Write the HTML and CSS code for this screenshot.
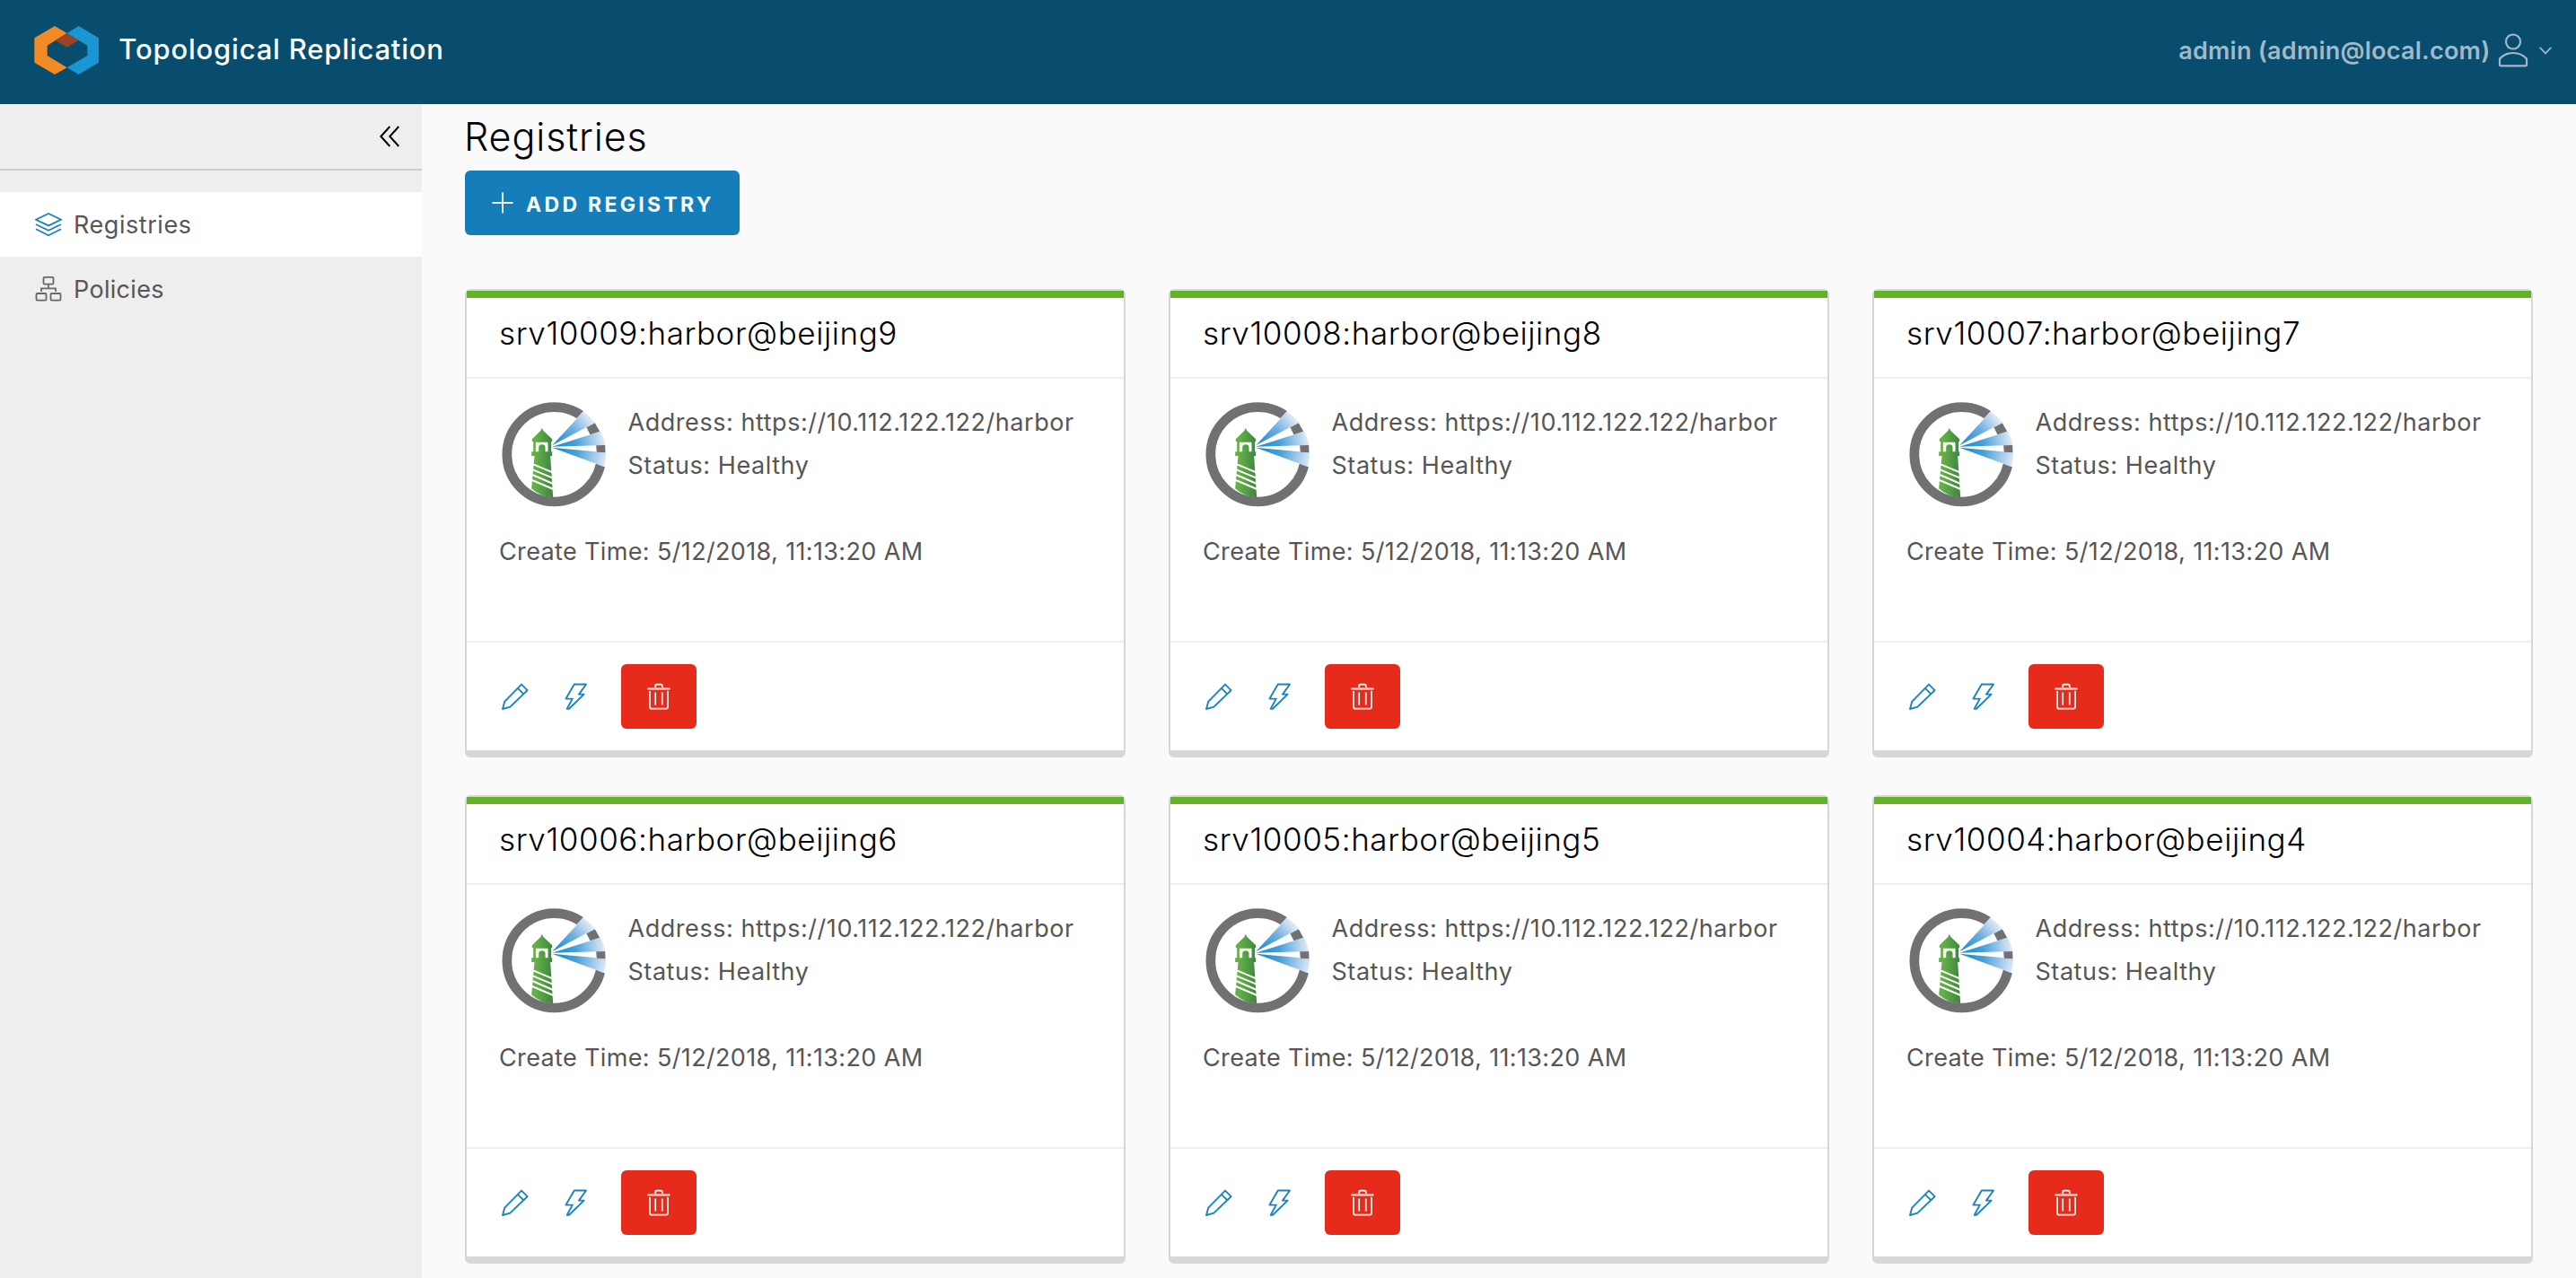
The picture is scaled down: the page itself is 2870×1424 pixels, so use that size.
FILE: index.html
```html
<!DOCTYPE html>
<html lang="en">
<head>
<meta charset="utf-8">
<title>Topological Replication</title>
<link rel="stylesheet" href="styles.css">
</head>
<body>
<svg class="defs" aria-hidden="true">
  <defs>
    <linearGradient id="tower" x1="138" y1="0" x2="210" y2="0" gradientUnits="userSpaceOnUse"><stop offset="0.2" stop-color="#64b045"/><stop offset="1" stop-color="#3c8540"/></linearGradient>
    <linearGradient id="beam1" x1="208" y1="184" x2="334" y2="84" gradientUnits="userSpaceOnUse"><stop offset="0" stop-color="#1488cb"/><stop offset="0.55" stop-color="#72afdf"/><stop offset="1" stop-color="#e8eff9"/></linearGradient>
    <linearGradient id="beam2" x1="208" y1="188" x2="382" y2="160" gradientUnits="userSpaceOnUse"><stop offset="0" stop-color="#1488cb"/><stop offset="0.45" stop-color="#4a9fd8"/><stop offset="1" stop-color="#e2ebf8"/></linearGradient>
    <linearGradient id="beam3" x1="208" y1="190" x2="386" y2="232" gradientUnits="userSpaceOnUse"><stop offset="0" stop-color="#1488cb"/><stop offset="0.45" stop-color="#4a9fd8"/><stop offset="1" stop-color="#dde9f7"/></linearGradient>
  </defs>
  <symbol id="harbor" viewBox="40 38 348 351">
    <circle cx="214" cy="213" r="158" fill="#fff" stroke="#717174" stroke-width="32"/>
    <path d="M208 183L340 36H420V268L208 191Z" fill="#fff"/>
    <path d="M207 183L311 70Q334 85 352 106Z" fill="url(#beam1)"/>
    <path d="M207 187L368 136Q380 157 385 182Z" fill="url(#beam2)"/>
    <path d="M207 190L387 207Q387 232 380 254Z" fill="url(#beam3)"/>
    <path d="M322 123L350 108L366 136L334 147ZM354 183L384 182L385 207L356 205Z" fill="#717174"/>
    <path d="M173 124L177 133L207 162V170H204V204H207V218H201L210 356Q170 357 138 327L148 218H138V204H144V170H140V162L169 133Z" fill="url(#tower)"/>
    <path d="M152 172H193V204H184V190Q184 180 173 180Q162 180 162 190V204H152Z" fill="#fff"/>
    <path d="M144 246L208 273M142 264L209 292M141 281L210 311M140 299L211 329" stroke="#fff" stroke-width="6"/>
  </symbol>
  <symbol id="pencil" viewBox="0 0 30 30"><path d="M1 29L3.3 20.6L22 1.6L28.5 8.2L9.4 26.6ZM17.8 5.8L24.3 12.4" fill="none" stroke="currentColor" stroke-width="1.9" stroke-linejoin="round"/></symbol>
  <symbol id="bolt" viewBox="0 0 26 30"><path d="M10.8 1.5H24L16 12.6H21.6L5 28.7H2.7L8.8 17.6H1.5Z" fill="none" stroke="currentColor" stroke-width="1.9" stroke-linejoin="round"/></symbol>
  <symbol id="trash" viewBox="0 0 26 30"><path d="M0.5 6.5H25.5M9.2 5V3Q9.2 1.6 10.6 1.6H15.4Q16.8 1.6 16.8 3V5M3 9V26.8Q3 28.6 4.8 28.6H21.2Q23 28.6 23 26.8V9M9.2 10.5V24.5M16.8 10.5V24.5" fill="none" stroke="currentColor" stroke-width="1.8"/></symbol>
</svg>

<header class="header">
  <svg class="logo" viewBox="38 27 217 162">
    <path d="M107 27L148 51L82 92V126L148 166L107 189L39 149V67Z" fill="#f38b25"/>
    <path d="M187 27L254 67V149L187 189L148 166L216 126V92L148 51Z" fill="#1a96d4"/>
    <path d="M148 51L187 74L148 98L108 75Z" fill="#974424"/>
  </svg>
  <span class="brand">Topological Replication</span>
  <div class="account">
    <span class="account-name">admin (admin@local.com)</span>
    <svg class="icon-user" viewBox="0 0 34 38"><circle cx="17" cy="9.5" r="8" /><path d="M2 28.5Q8 22 17 22T32 28.5V35Q32 36.4 30.6 36.4H3.4Q2 36.4 2 35Z"/></svg>
    <svg class="icon-caret" viewBox="0 0 14 9"><path d="M0.7 0.8L7 7.4L13.3 0.8"/></svg>
  </div>
</header>

<div class="layout">
  <nav class="sidebar">
    <div class="collapse">
      <svg class="icon-collapse" viewBox="0 0 22 24"><path d="M11.3 1L1.3 12L11.3 23M21.3 1L11.3 12L21.3 23"/></svg>
    </div>
    <a class="nav-item active">
      <svg class="nav-icon" viewBox="0 0 30 30"><path d="M1 9.7L15 3L29 9.7L15 16.4ZM1 15L15 21.8L29 15M1 20.3L15 27.2L29 20.3"/></svg>
      <span>Registries</span>
    </a>
    <a class="nav-item">
      <svg class="nav-icon" viewBox="0 0 30 30"><rect x="9.5" y="1.8" width="11" height="7.8" rx="1"/><rect x="1.5" y="20" width="11" height="7.6" rx="1"/><rect x="17.5" y="20" width="11" height="7.6" rx="1"/><path d="M15 10V14M7 18V14.3H23V18"/></svg>
      <span class="policies">Policies</span>
    </a>
  </nav>
  <main class="content">
    <h1 class="page-title">Registries</h1>
    <button class="add-button">
      <svg class="icon-plus" viewBox="0 0 24 24"><path d="M12 0.5V23.5M0.5 12H23.5"/></svg>
      <span>ADD REGISTRY</span>
    </button>
    <div class="cards" id="cards"></div>
  </main>
</div>

<template id="card">
  <article class="card">
    <h2 class="card-title"></h2>
    <div class="card-body">
      <div class="info">
        <svg class="harbor"><use href="#harbor"/></svg>
        <div class="facts"><p>Address: https://10.112.122.122/harbor</p><p>Status: Healthy</p></div>
      </div>
      <p class="created">Create Time: 5/12/2018, 11:13:20 AM</p>
    </div>
    <div class="card-footer">
      <svg class="icon-edit"><use href="#pencil"/></svg>
      <svg class="icon-bolt"><use href="#bolt"/></svg>
      <button class="delete"><svg class="icon-trash"><use href="#trash"/></svg></button>
    </div>
  </article>
</template>
<script src="cards.js"></script>
</body>
</html>
```
FILE: cards.js
```js
const list = document.getElementById('cards');
const template = document.getElementById('card');
for (const n of [9, 8, 7, 6, 5, 4]) {
  const card = template.content.cloneNode(true);
  card.querySelector('.card-title').textContent = `srv1000${n}:harbor@beijing${n}`;
  list.append(card);
}
```
FILE: styles.css
```css
* { box-sizing: border-box; margin: 0; padding: 0; }
body { height: 1424px; overflow: hidden; background: #fafafa; color: #565656; font-family: Inter, "Liberation Sans", sans-serif; font-size: 27px; }
svg { display: block; flex: none; }
.defs { width: 0; height: 0; position: absolute; }

.header { display: flex; height: 116px; padding: 0 27px 0 38px; background: #084c6e; }
.logo { width: 72.3px; height: 54px; margin-top: 29px; }
.brand { margin-left: 22px; color: #fff; font-size: 31px; font-weight: 500; letter-spacing: 0.8px; line-height: 109px; }
.account { display: flex; margin-left: auto; color: #a2b9c7; }
.account svg { fill: none; stroke: currentColor; }
.account-name { font-weight: 600; letter-spacing: 0.25px; line-height: 113px; }
.icon-user { width: 34px; height: 38px; margin: 36.5px 12.5px 0 8px; stroke-width: 2.2; }
.icon-caret { width: 14px; height: 9px; margin-top: 51.5px; stroke-width: 1.7; }

.layout { display: flex; height: 1308px; }
.sidebar { width: 470px; flex: none; background: #eee; }
.collapse { display: flex; justify-content: flex-end; height: 74px; margin-bottom: 24px; padding: 24px 25px 0 0; border-bottom: 2px solid #ccc; }
.icon-collapse { width: 22px; height: 24px; fill: none; stroke: #000; stroke-width: 2; }
.nav-item { display: flex; align-items: center; gap: 13px; height: 72px; padding-left: 39px; letter-spacing: 0.55px; }
.policies { letter-spacing: 0.3px; }
.nav-icon { width: 30px; height: 30px; fill: none; stroke: #686868; stroke-width: 1.8; }
.active { background: #fff; }
.active .nav-icon { stroke: #1a82bd; }

.content { flex: 1; padding: 10px 48px 0; }
.page-title { height: 64px; margin-left: -1px; color: #000; font-size: 43px; font-weight: 300; letter-spacing: 0.9px; line-height: 53px; }
button { border: 0; border-radius: 6px; font-family: inherit; color: #fff; }
.add-button { display: flex; align-items: center; gap: 14px; width: 306px; height: 72px; padding-left: 30px; background: #147dba; font-size: 23px; font-weight: 700; letter-spacing: 3.3px; white-space: nowrap; }
.add-button span { padding-top: 3px; }
.icon-plus { width: 24px; height: 24px; fill: none; stroke: #fff; stroke-width: 1.8; }

.cards { display: grid; grid-template-columns: repeat(3, 736px); gap: 42px 48px; margin-top: 60px; }
.card { height: 522px; border: 2px solid #d7d7d7; border-bottom-width: 8px; border-radius: 6px; background: #fff; }
.card-title { height: 98px; padding-left: 36px; border-top: 8px solid #62b32a; border-bottom: 2px solid #eee; color: #000; font-size: 35px; font-weight: 300; letter-spacing: 0.58px; line-height: 78px; }
.card-body { height: 294px; padding: 26px 36px 0; border-bottom: 2px solid #eee; }
.info { display: flex; gap: 24px; height: 143px; }
.harbor { width: 117px; height: 117px; margin-left: 2.5px; }
.facts { letter-spacing: 0.55px; line-height: 48px; margin-top: -1px; }
.created { letter-spacing: 0.36px; line-height: 48px; }
.card-footer { display: flex; align-items: center; height: 120px; padding-left: 39px; color: #1a82bd; }
.icon-edit { width: 30px; height: 30px; }
.icon-bolt { width: 26px; height: 30px; margin-left: 40px; }
.delete { display: flex; align-items: center; justify-content: center; width: 84px; height: 72px; margin-left: 37px; background: #e62b1b; }
.icon-trash { width: 26px; height: 30px; }
```
